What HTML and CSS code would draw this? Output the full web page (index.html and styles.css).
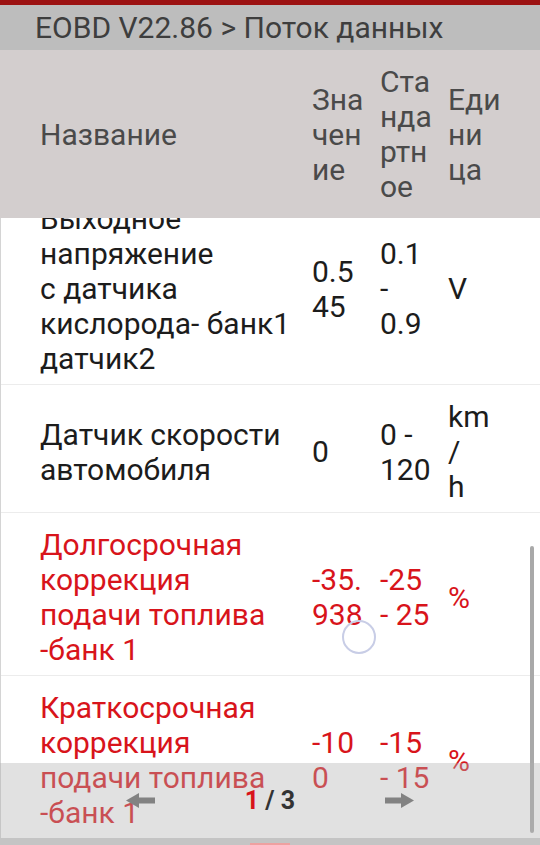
FILE: index.html
```html
<!DOCTYPE html>
<html lang="ru">
<head>
  <meta charset="UTF-8" />
  <meta name="viewport" content="width=device-width, initial-scale=1.0" />
  <title>EOBD V22.86 - Поток данных</title>
  <link rel="stylesheet" href="styles.css">
</head>
<body>
  <div class="screen">
    <div class="statusbar"></div>
    <div class="titlebar">EOBD V22.86 &gt; Поток данных</div>

    <div class="thead">
      <div class="cell">Название</div>
      <div class="cell">Зна<br>чен<br>ие</div>
      <div class="cell">Ста<br>нда<br>ртн<br>ое</div>
      <div class="cell">Еди<br>ни<br>ца</div>
    </div>

    <div class="viewport">
      <div class="rows">
        <div class="row">
          <div class="cell">Выходное<br>напряжение<br>с датчика<br>кислорода- банк1<br>датчик2</div>
          <div class="cell">0.5<br>45</div>
          <div class="cell">0.1<br>-<br>0.9</div>
          <div class="cell">V</div>
        </div>
        <div class="row">
          <div class="cell">Датчик скорости<br>автомобиля</div>
          <div class="cell">0</div>
          <div class="cell">0 -<br>120</div>
          <div class="cell">km<br>/<br>h</div>
        </div>
        <div class="row alert">
          <div class="cell">Долгосрочная<br>коррекция<br>подачи топлива<br>-банк 1</div>
          <div class="cell">-35.<br>938</div>
          <div class="cell">-25<br>- 25</div>
          <div class="cell">%</div>
        </div>
        <div class="row alert">
          <div class="cell">Краткосрочная<br>коррекция<br>подачи топлива<br>-банк 1</div>
          <div class="cell">-10<br>0</div>
          <div class="cell">-15<br>- 15</div>
          <div class="cell">%</div>
        </div>
      </div>
    </div>

    <div class="scrollbar"></div>
    <div class="loader"></div>

    <div class="pager">
      <svg class="arrow" width="29" height="15" viewBox="0 0 29 15">
        <polygon points="0,7.5 13,0 13,15" />
        <rect x="12" y="4.5" width="17" height="6" />
      </svg>
      <div class="page"><span class="current">1</span> / 3</div>
      <svg class="arrow" width="29" height="15" viewBox="0 0 29 15">
        <polygon points="29,7.5 16,0 16,15" />
        <rect x="0" y="4.5" width="17" height="6" />
      </svg>
    </div>
    <div class="navstrip"><div class="navmark"></div></div>
  </div>
</body>
</html>
```

FILE: styles.css
```css
body { margin: 0; font-family: Roboto, "Noto Sans", sans-serif; }
.screen { position: relative; width: 540px; height: 845px; overflow: hidden; display: flex; flex-direction: column; background: #fff; }

.statusbar { height: 5px; background: #9c1212; }
.titlebar { height: 45px; line-height: 45px; padding-left: 35px; background: #bdbdbd; color: #3e3e3e; font-size: 30px; }

.thead, .row { display: grid; grid-template-columns: 272px 68px 68px 1fr; align-items: center; padding-left: 40px; font-size: 30px; line-height: 35px; white-space: nowrap; }
.thead { position: relative; z-index: 1; height: 168px; box-sizing: border-box; background: #d3cece; color: #4a4a4a; }

.viewport { flex: 1; overflow: hidden; border-left: 1px solid #d4d4d4; }
.rows { margin-top: -31px; }
.row { padding-top: 14px; padding-bottom: 8px; padding-left: 39px; border-bottom: 1px solid #ececec; color: #1c1c1c; }
.row.alert { color: #d8141b; }

.scrollbar { position: absolute; left: 530px; top: 546px; width: 4px; height: 287px; border-radius: 2px; background: #a9a9a9; }
.loader { position: absolute; left: 342px; top: 620px; width: 30px; height: 30px; border: 2px solid #c8cde6; border-radius: 50%; }

.pager { position: absolute; left: 0; right: 0; top: 763px; height: 75px; display: flex; align-items: center; justify-content: center; gap: 90px; background: rgba(175, 175, 175, 0.38); }
.arrow { fill: #828282; }
.page { font-size: 25px; font-weight: bold; color: #333; }
.page .current { color: #d8141b; }

.navstrip { position: absolute; left: 0; right: 0; bottom: 0; height: 7px; background: #c4c4c4; }
.navmark { width: 40px; height: 2px; margin: 5px auto 0; background: #eea0a0; }
```
